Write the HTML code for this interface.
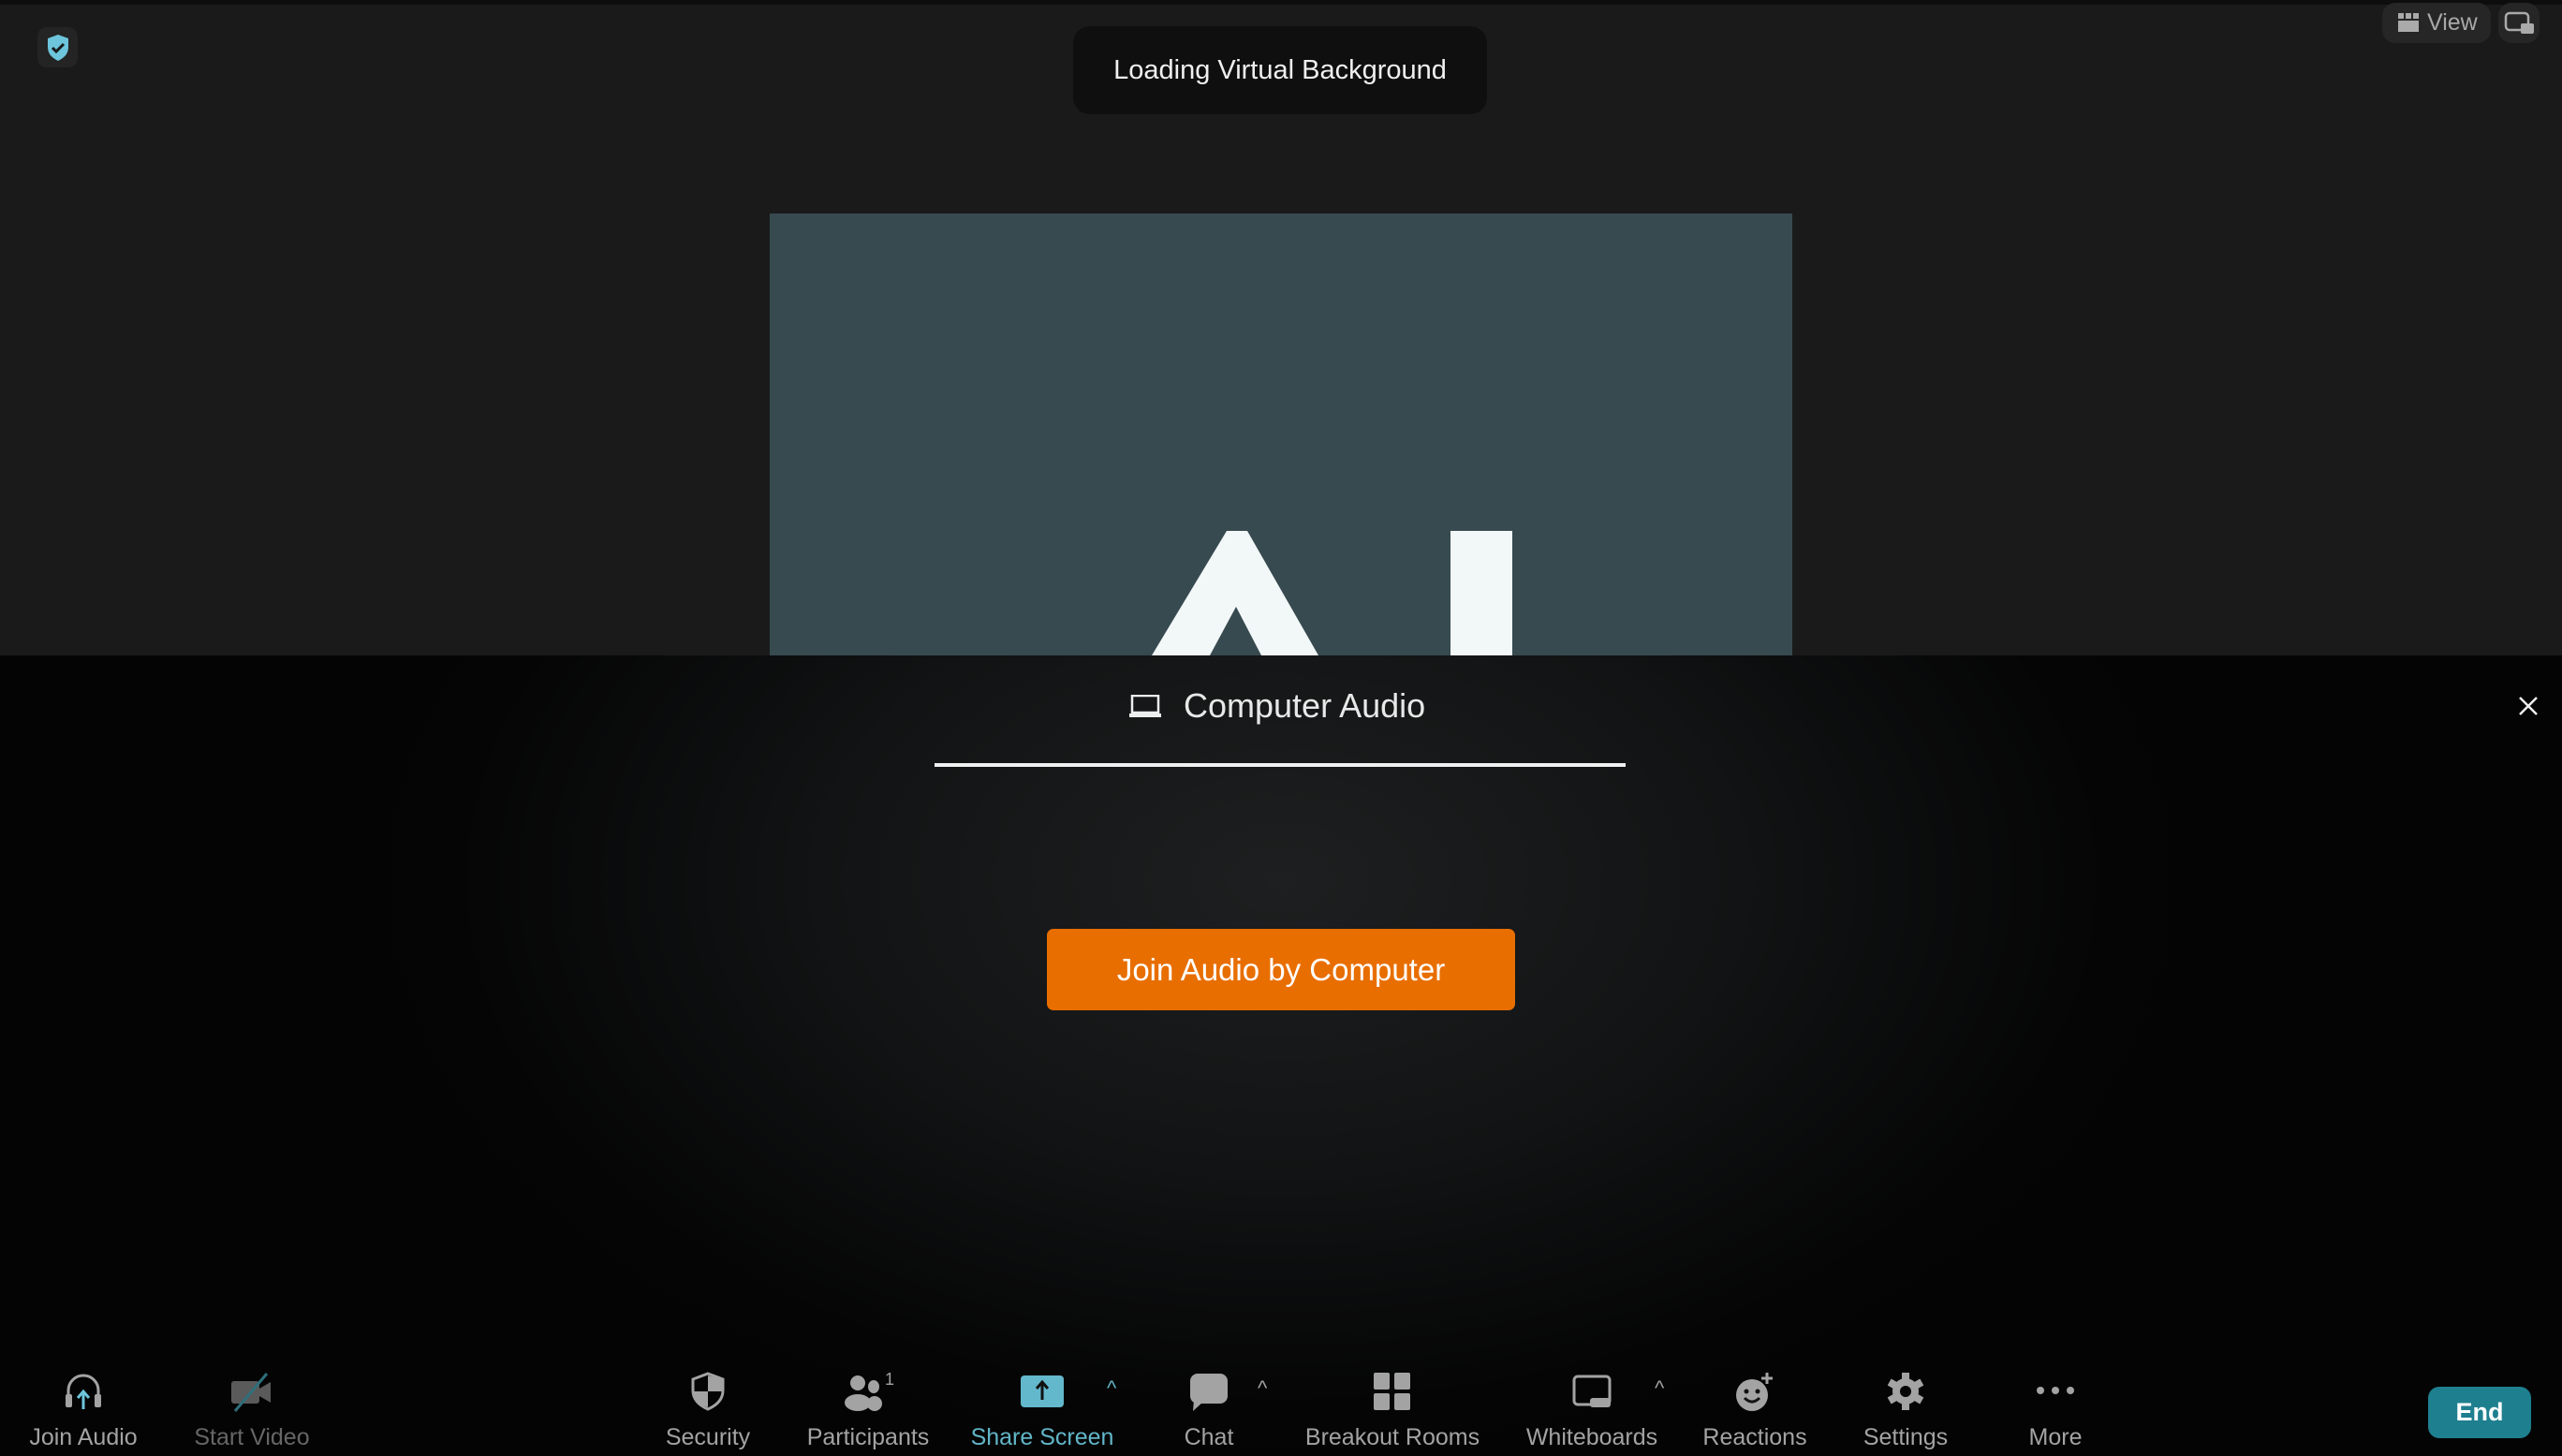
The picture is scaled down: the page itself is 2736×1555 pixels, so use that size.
<!DOCTYPE html>
<html><head><meta charset="utf-8"><style>
*{margin:0;padding:0;box-sizing:border-box}
body{width:2736px;height:1555px;overflow:hidden;background:#1a1a1a;font-family:"Liberation Sans","DejaVu Sans",sans-serif;position:relative}
.abs{position:absolute}
.lbl{position:absolute;top:1521px;font-size:25px;color:#a3a3a3;white-space:nowrap;transform:translateX(-50%)}
.ic{position:absolute;top:1465px;transform:translateX(-50%)}
.car{position:absolute;top:1470px;color:#a3a3a3;font-size:22px}
</style></head><body>
<div class="abs" style="left:0;top:0;width:2736px;height:5px;background:#0d0d0d"></div>
<div class="abs" style="left:40px;top:29px;width:43px;height:43px;background:#242424;border-radius:10px"></div>
<svg class="abs" style="left:48px;top:36px" width="28" height="30" viewBox="0 0 28 30"><path d="M14 1 L25 5 V14 C25 22 20 26 14 29 C8 26 3 22 3 14 V5 Z" fill="#6cc5db"/><path d="M8 15 L12 19 L20 11" stroke="#1a1a1a" stroke-width="3" fill="none"/></svg>
<div class="abs" style="left:1146px;top:28px;width:442px;height:94px;background:#0f0f0f;border-radius:18px;color:#f0f0f0;font-size:29px;line-height:94px;text-align:center">Loading Virtual Background</div>
<div class="abs" style="left:2544px;top:3px;width:116px;height:43px;background:#262626;border-radius:14px;color:#a8a8a8;font-size:25px;line-height:43px;padding-left:48px">View</div>
<svg class="abs" style="left:2561px;top:14px" width="22" height="22"><rect x="0" y="0" width="6" height="6" fill="#aaa"/><rect x="8" y="0" width="6" height="6" fill="#aaa"/><rect x="16" y="0" width="6" height="6" fill="#aaa"/><rect x="0" y="8" width="22" height="12" fill="#aaa"/></svg>
<div class="abs" style="left:2668px;top:3px;width:44px;height:43px;background:#262626;border-radius:14px"></div>
<svg class="abs" style="left:2674px;top:12px" width="34" height="26"><rect x="2" y="2" width="24" height="18" rx="4" fill="none" stroke="#aaa" stroke-width="2.5"/><rect x="18" y="13" width="14" height="11" rx="2" fill="#aaa"/></svg>
<div class="abs" style="left:822px;top:228px;width:1092px;height:472px;background:#374a4f;overflow:hidden">
<svg width="1092" height="472"><polygon points="408,472 488,339 510,339 586,472 525,472 498,420 470,472" fill="#f2f7f8"/><rect x="727" y="339" width="66" height="133" fill="#f2f7f8"/></svg>
</div>
<div class="abs" style="left:0;top:700px;width:2736px;height:855px;background:radial-gradient(ellipse 1100px 700px at 1368px 240px,#1d1f20 0%,#111314 45%,#050505 80%,#040404 100%)"></div>
<svg class="abs" style="left:1206px;top:742px" width="34" height="26"><rect x="3" y="1" width="28" height="18" fill="none" stroke="#eee" stroke-width="2.5"/><rect x="0" y="20" width="34" height="4" fill="#eee"/></svg>
<div class="abs" style="left:1264px;top:730px;font-size:36px;color:#e8e8e8;line-height:48px">Computer Audio</div>
<div class="abs" style="left:998px;top:815px;width:738px;height:4px;background:#f0f0f0"></div>
<svg class="abs" style="left:2689px;top:743px" width="22" height="22"><path d="M2 2 L20 20 M20 2 L2 20" stroke="#eee" stroke-width="2.5"/></svg>
<div class="abs" style="left:1118px;top:992px;width:500px;height:87px;background:#e86e00;border-radius:7px;color:#fff;font-size:33px;line-height:87px;text-align:center">Join Audio by Computer</div>

<svg class="ic" style="left:89px" width="44" height="42"><path d="M6 34 V20 A16 16 0 0 1 38 20 V34" fill="none" stroke="#a3a3a3" stroke-width="3"/><rect x="3" y="24" width="7" height="14" rx="2" fill="#a3a3a3"/><rect x="34" y="24" width="7" height="14" rx="2" fill="#a3a3a3"/><path d="M22 40 V22 M16 28 L22 21 L28 28" stroke="#6cc5db" stroke-width="3" fill="none"/></svg>
<div class="lbl" style="left:89px">Join Audio</div>
<svg class="ic" style="left:269px" width="52" height="44"><rect x="4" y="10" width="30" height="24" rx="3" fill="#5a5a5a"/><path d="M34 18 L46 11 V33 L34 26Z" fill="#5a5a5a"/><path d="M8 42 L42 2" stroke="#2e6f7b" stroke-width="3"/></svg>
<div class="lbl" style="left:269px;color:#666">Start Video</div>
<svg class="ic" style="left:756px" width="40" height="42"><path d="M20 2 L36 8 V20 C36 30 29 36 20 40 C11 36 4 30 4 20 V8 Z" fill="none" stroke="#a3a3a3" stroke-width="3"/><path d="M20 4 V21 H35 V8 Z M20 21 V38 C11 35 5 29 5 21 Z" fill="#a3a3a3"/></svg>
<div class="lbl" style="left:756px">Security</div>
<svg class="ic" style="left:927px" width="56" height="42"><circle cx="17" cy="12" r="8" fill="#a3a3a3"/><ellipse cx="17" cy="33" rx="14" ry="9" fill="#a3a3a3"/><ellipse cx="34" cy="16" rx="6" ry="7" fill="#a3a3a3"/><ellipse cx="35" cy="34" rx="8" ry="8" fill="#a3a3a3"/><text x="46" y="14" font-size="18" fill="#a3a3a3" font-family="Liberation Sans">1</text></svg>
<div class="lbl" style="left:927px">Participants</div>
<svg class="ic" style="left:1113px" width="50" height="42"><rect x="2" y="4" width="46" height="34" rx="4" fill="#63b8cc"/><path d="M25 30 V12 M19 18 L25 11 L31 18" stroke="#111" stroke-width="3" fill="none"/></svg>
<div class="lbl" style="left:1113px;color:#62b6c9">Share Screen</div>
<div class="car" style="left:1182px;color:#62b6c9">^</div>
<svg class="ic" style="left:1291px" width="44" height="44"><rect x="2" y="2" width="40" height="32" rx="8" fill="#a3a3a3"/><path d="M6 30 L5 42 L16 32Z" fill="#a3a3a3"/></svg>
<div class="lbl" style="left:1291px">Chat</div>
<div class="car" style="left:1343px">^</div>
<svg class="ic" style="left:1487px" width="42" height="42"><rect x="1" y="1" width="17" height="18" rx="2" fill="#a3a3a3"/><rect x="23" y="1" width="17" height="18" rx="2" fill="#a3a3a3"/><rect x="1" y="23" width="17" height="18" rx="2" fill="#a3a3a3"/><rect x="23" y="23" width="17" height="18" rx="2" fill="#a3a3a3"/></svg>
<div class="lbl" style="left:1487px">Breakout Rooms</div>
<svg class="ic" style="left:1700px" width="44" height="42"><rect x="3" y="5" width="38" height="30" rx="4" fill="none" stroke="#a3a3a3" stroke-width="3"/><rect x="20" y="28" width="22" height="10" rx="3" fill="#a3a3a3"/></svg>
<div class="lbl" style="left:1700px">Whiteboards</div>
<div class="car" style="left:1767px">^</div>
<svg class="ic" style="left:1874px" width="44" height="44"><circle cx="19" cy="25" r="17" fill="#a3a3a3"/><circle cx="13" cy="21" r="2.5" fill="#111"/><circle cx="25" cy="21" r="2.5" fill="#111"/><path d="M11 28 Q19 36 27 28" stroke="#111" stroke-width="3" fill="none"/><path d="M35 1 V13 M29 7 H41" stroke="#a3a3a3" stroke-width="3"/></svg>
<div class="lbl" style="left:1874px">Reactions</div>
<svg class="ic" style="left:2035px" width="42" height="42" viewBox="0 0 42 42"><g fill="#a3a3a3"><circle cx="21" cy="21" r="14"/><rect x="17" y="1" width="8" height="40"/><rect x="17" y="1" width="8" height="40" transform="rotate(60 21 21)"/><rect x="17" y="1" width="8" height="40" transform="rotate(120 21 21)"/></g><circle cx="21" cy="21" r="6" fill="#050505"/></svg>
<div class="lbl" style="left:2035px">Settings</div>
<svg class="ic" style="left:2195px;top:1478px" width="44" height="14"><circle cx="6" cy="7" r="4" fill="#a3a3a3"/><circle cx="22" cy="7" r="4" fill="#a3a3a3"/><circle cx="38" cy="7" r="4" fill="#a3a3a3"/></svg>
<div class="lbl" style="left:2195px">More</div>
<div class="abs" style="left:2593px;top:1481px;width:110px;height:55px;background:#1e7f8f;border-radius:12px;color:#fff;font-weight:bold;font-size:27px;line-height:55px;text-align:center">End</div>
</body></html>
